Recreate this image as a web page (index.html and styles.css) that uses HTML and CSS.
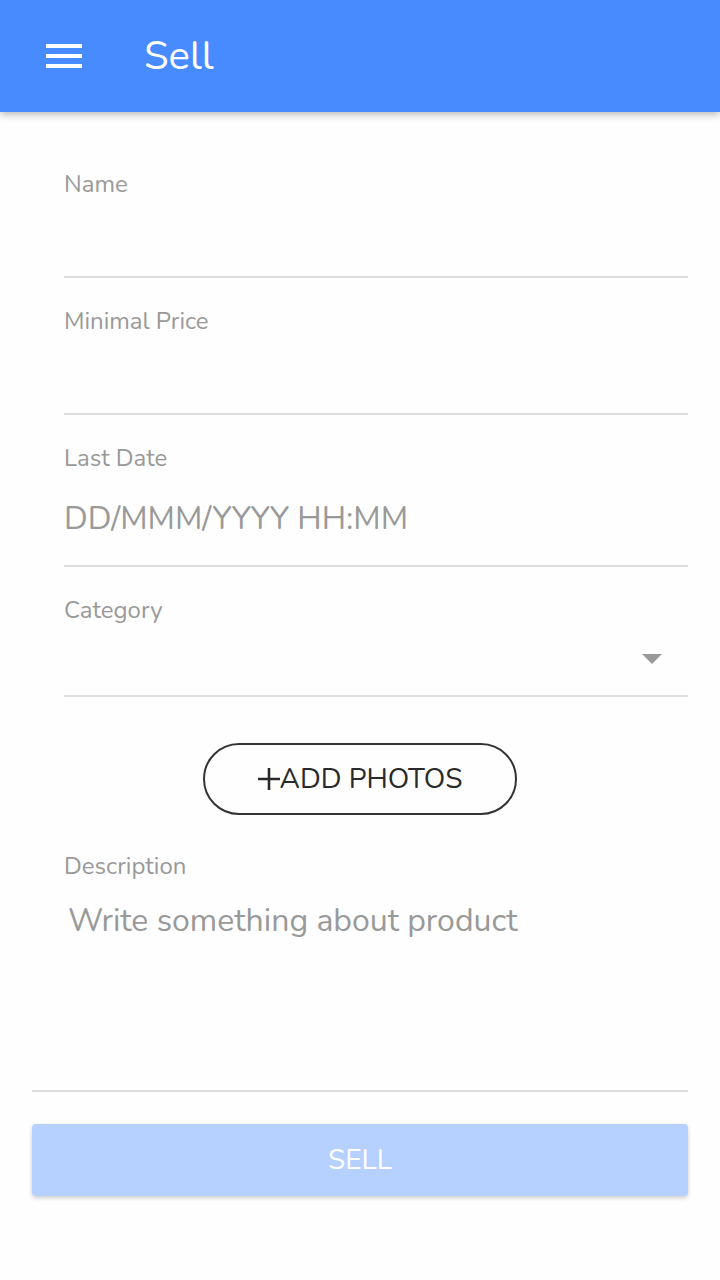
FILE: index.html
```html
<!DOCTYPE html>
<html lang="en">
<head>
<meta charset="utf-8">
<meta name="viewport" content="width=device-width, initial-scale=1">
<title>Sell</title>
<link rel="stylesheet" href="styles.css">
</head>
<body>
<header class="toolbar">
  <button class="menu-button" type="button" aria-label="Menu">
    <svg class="menu-icon" viewBox="0 0 36 24" aria-hidden="true"><path fill="currentColor" d="M0 0h36v4H0zM0 10h36v4H0zM0 20h36v4H0z"/></svg>
  </button>
  <h1 class="title">Sell</h1>
</header>
<main>
  <form class="form">
    <div class="field">
      <label class="label" for="name">Name</label>
      <input class="control" id="name" type="text">
    </div>
    <div class="field">
      <label class="label" for="price">Minimal Price</label>
      <input class="control" id="price" type="text">
    </div>
    <div class="field">
      <label class="label" for="date">Last Date</label>
      <input class="control control-date" id="date" type="text" placeholder="DD/MMM/YYYY HH:MM">
    </div>
    <div class="field">
      <label class="label" for="category">Category</label>
      <div class="select-row">
        <select class="control control-select" id="category"><option value=""></option></select>
        <svg class="caret" viewBox="0 0 20 10" aria-hidden="true"><path fill="currentColor" d="M0 0h20L10 10z"/></svg>
      </div>
    </div>
    <button class="photos" type="button">
      <svg class="plus" viewBox="0 0 22 22" aria-hidden="true"><path fill="none" stroke="currentColor" stroke-width="2.6" d="M11 0v22M0 11h22"/></svg>ADD PHOTOS
    </button>
    <div class="field field-last">
      <label class="label" for="description">Description</label>
      <textarea class="control control-area" id="description" placeholder="Write something about product"></textarea>
    </div>
    <button class="submit" type="submit" disabled>SELL</button>
  </form>
</main>
</body>
</html>
```
FILE: styles.css
```css
* {
  box-sizing: border-box;
}

body {
  margin: 0;
  background: #fefefe;
  font-family: Nunito, Lato, "Open Sans", sans-serif;
  font-weight: 400;
  color: #999;
}

button,
input,
select,
textarea {
  font: inherit;
  color: inherit;
}

.toolbar {
  display: flex;
  align-items: center;
  gap: 62px;
  height: 112px;
  padding: 0 46px;
  background: #488aff;
  color: #fff;
  box-shadow: 0 2px 8px rgba(0, 0, 0, 0.3);
}

.menu-button {
  display: flex;
  padding: 0;
  border: 0;
  background: none;
}

.menu-icon {
  width: 36px;
  height: 24px;
}

.title {
  margin: 0;
  font-size: 40px;
  line-height: 48px;
  font-weight: 400;
}

.form {
  display: flex;
  flex-direction: column;
  padding: 29px 32px 32px;
}

.field {
  display: flex;
  flex-direction: column;
  margin-left: 32px;
  padding-top: 29px;
  border-bottom: 2px solid #dedede;
}

.label {
  font-size: 24px;
  line-height: 28px;
}

.control {
  width: 100%;
  height: 78px;
  padding: 0;
  border: 0;
  outline: 0;
  border-radius: 0;
  background: transparent;
  font-size: 32px;
  line-height: 40px;
}

.control::placeholder {
  color: #999;
  opacity: 1;
}

.control-date {
  height: 93px;
}

.select-row {
  display: grid;
  align-items: center;
}

.control-select {
  grid-area: 1 / 1;
  height: 71px;
  appearance: none;
}

.caret {
  grid-area: 1 / 1;
  justify-self: end;
  width: 20px;
  height: 10px;
  margin: 0 26px 2px 0;
  pointer-events: none;
}

.photos {
  display: flex;
  align-items: center;
  align-self: center;
  height: 72px;
  margin: 46px 0 8px;
  padding: 0 53px;
  border: 2px solid #333;
  border-radius: 36px;
  background: transparent;
  color: #2a2a2a;
  font-size: 28px;
}

.plus {
  width: 22px;
  height: 22px;
}

.field-last {
  margin-left: 0;
  padding-left: 32px;
}

.control-area {
  display: block;
  height: 210px;
  padding: 21px 4px;
  resize: none;
}

.submit {
  height: 72px;
  margin-top: 32px;
  border: 0;
  border-radius: 4px;
  background: #b6d0ff;
  color: #fff;
  font-size: 28px;
  box-shadow: 0 2px 4px rgba(0, 0, 0, 0.2);
}
```
